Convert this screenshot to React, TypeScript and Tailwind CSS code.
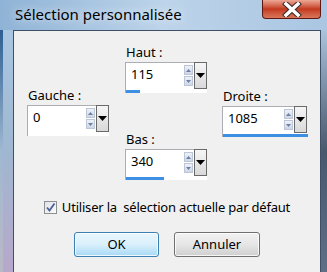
import React from 'react';

function ArrowBtn({ up }: { up?: boolean }) {
  return (
    <div className="w-[9px] h-[10px] flex items-center justify-center border border-[#bcc6d6] bg-gradient-to-b from-[#eef2f8] to-[#cdd7e5]">
      <svg width="5" height="3" viewBox="0 0 5 3">
        {up ? <path d="M0 3h5L2.5 0z" fill="#6e7fa6" /> : <path d="M0 0h5L2.5 3z" fill="#6e7fa6" />}
      </svg>
    </div>
  );
}

function SpinField({ value, fill, wide }: { value: string; fill: number; wide?: boolean }) {
  return (
    <div className={`${wide ? 'w-[85px]' : 'w-[82px]'} h-[31px] flex flex-col bg-white border-l border-t border-[#abadb3]`}>
      <div className="flex h-[27px]">
        <div className="flex-1 flex items-start">
          <span className="pl-[5px] pt-[3px] text-[13px] leading-[17px] text-black">{value}</span>
          <div className="ml-auto mt-[2px] mr-px flex flex-col gap-px">
            <ArrowBtn up />
            <ArrowBtn />
          </div>
        </div>
        <div className="w-[13px] h-[27px] -mt-px border border-[#6a6a6a] bg-gradient-to-b from-[#f6f6f6] to-[#d9d9d9] flex items-center justify-center">
          <svg width="9" height="5" viewBox="0 0 9 5">
            <path d="M0 0h9L4.5 5z" fill="#000" />
          </svg>
        </div>
      </div>
      <div className="h-[3px] mt-auto bg-white">
        <div className="h-full bg-[#3c8fe2]" style={{ width: fill }} />
      </div>
    </div>
  );
}

function Field({ label, value, fill, wide }: { label: string; value: string; fill: number; wide?: boolean }) {
  return (
    <div className="flex flex-col">
      <span className="text-[13px] leading-[16px] text-black pl-px">{label}</span>
      <div className="mt-[2px]">
        <SpinField value={value} fill={fill} wide={wide} />
      </div>
    </div>
  );
}

export default function App() {
  return (
    <div className="w-[327px] h-[272px] overflow-hidden flex flex-col font-['Noto_Sans','Liberation_Sans',sans-serif] bg-gradient-to-r from-[#8fb3d6] via-[#bdd4ea] to-[#aac6e2]">
      {/* title bar */}
      <div className="h-[30px] shrink-0 flex items-start">
        <span className="pl-[15px] pt-[4px] text-[15px] leading-[20px] text-black [text-shadow:0_0_8px_rgba(255,255,255,0.9)]">
          Sélection personnalisée
        </span>
        <div className="ml-auto mr-[6px] w-[59px] h-[19px] rounded-b-[4px] border border-t-0 border-[#5e1a12] bg-gradient-to-b from-[#eba896] via-[#c3391f] to-[#d9765a] flex items-center justify-center">
          <svg width="20" height="15" viewBox="0 0 20 15">
            <path d="M4 2l12 11M16 2L4 13" stroke="#3a2a2a" strokeWidth="5.5" strokeLinecap="square" />
            <path d="M4 2l12 11M16 2L4 13" stroke="#fff" strokeWidth="3.5" strokeLinecap="square" />
          </svg>
        </div>
      </div>

      <div className="flex flex-1 min-h-0">
        {/* left frame */}
        <div className="w-[13px] flex">
          <div className="w-[3px] bg-gradient-to-b from-[#2c5f92] via-[#9fb8d2] to-[#b9b9c6]" />
          <div className="flex-1 bg-gradient-to-b from-[#a9c6e2] via-[#9fb7d0] to-[#b7a8cb]" />
        </div>

        {/* client */}
        <div className="w-[308px] bg-[#f0f0f0] border-l border-t border-r border-[#3d5068] flex flex-col">
          <div className="flex pl-[13px]">
            <div className="mt-[56px]">
              <Field label="Gauche :" value="0" fill={0} />
            </div>
            <div className="ml-[16px] mt-[13px] flex flex-col">
              <Field label="Haut :" value="115" fill={14} />
              <div className="mt-[38px]">
                <Field label="Bas :" value="340" fill={38} />
              </div>
            </div>
            <div className="ml-[15px] mt-[57px]">
              <Field label="Droite :" value="1085" fill={85} wide />
            </div>
          </div>

          <div className="mt-[19px] flex items-center justify-center gap-[5px]">
            <div className="w-[13px] h-[13px] border border-[#8e8f8f] bg-gradient-to-br from-[#dfe3ea] to-[#fbfbfb] flex items-center justify-center">
              <svg width="11" height="11" viewBox="0 0 11 11">
                <path d="M2 5.5l2.5 3L9.5 1.5" stroke="#4a5f93" strokeWidth="1.8" fill="none" />
              </svg>
            </div>
            <span className="text-[13px] tracking-[-0.2px] leading-[16px] text-black whitespace-pre">Utiliser la  sélection actuelle par défaut</span>
          </div>

          <div className="mt-[17px] flex justify-center gap-[15px]">
            <button className="w-[85px] h-[25px] rounded-[3px] border border-[#3c7fb1] bg-gradient-to-b from-[#eaf6fd] via-[#d9f0fc] to-[#a7d9f5] shadow-[inset_0_0_0_1px_rgba(255,255,255,0.8)] text-[13px] text-black">
              OK
            </button>
            <button className="w-[86px] h-[25px] rounded-[3px] border border-[#707070] bg-gradient-to-b from-[#f2f2f2] via-[#e6e6e6] to-[#cfcfcf] shadow-[inset_0_0_0_1px_rgba(255,255,255,0.8)] text-[13px] text-black">
              Annuler
            </button>
          </div>
        </div>

        {/* right frame */}
        <div className="flex-1 bg-gradient-to-b from-[#abc4dd] via-[#4a586c] to-[#5f6f86]" />
      </div>
    </div>
  );
}
